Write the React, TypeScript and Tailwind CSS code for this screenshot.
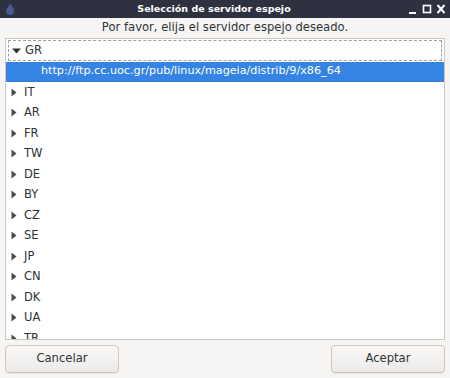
import React from "react";

const countries = ["IT", "AR", "FR", "TW", "DE", "BY", "CZ", "SE", "JP", "CN", "DK", "UA", "TR"];

function RightTri() {
  return (
    <svg width="6" height="9" viewBox="0 0 6 9" className="shrink-0">
      <path d="M0.5 0.5 L5.5 4.5 L0.5 8.5 Z" fill="#4a4a4a" />
    </svg>
  );
}

function DownTri() {
  return (
    <svg width="9" height="6" viewBox="0 0 9 6" className="shrink-0">
      <path d="M0 0.5 L9 0.5 L4.5 5.5 Z" fill="#333" />
    </svg>
  );
}

export default function App() {
  const font = { fontFamily: '"DejaVu Sans", sans-serif' };
  return (
    <div className="w-[450px] h-[378px] flex flex-col bg-[#f6f5f4] overflow-hidden" style={font}>
      <div className="h-[18px] bg-[#2e3140] flex items-center relative shrink-0">
        <svg width="12" height="14" viewBox="0 0 12 14" className="absolute left-[4px] top-[2px]">
          <path d="M6 1 C7 4 10 5 10 9 C10 12 8 13 6 13 C4 13 2 12 2 9 C2 6 5 5 6 1 Z" fill="#4a5a8c" />
        </svg>
        <div className="flex-1 text-center text-white font-bold text-[9.5px] leading-none pr-[22px]">Selección de servidor espejo</div>
        <div className="absolute right-[4px] top-[3px] flex items-center gap-[4px]">
          <svg width="10" height="12" viewBox="0 0 10 12">
            <rect x="1" y="9" width="7" height="2" fill="#fff" />
          </svg>
          <svg width="10" height="12" viewBox="0 0 10 12">
            <rect x="1.5" y="2.5" width="7" height="7" fill="none" stroke="#fff" strokeWidth="1.6" />
          </svg>
          <svg width="10" height="12" viewBox="0 0 10 12">
            <path d="M1.5 2 L8.5 10 M8.5 2 L1.5 10" stroke="#fff" strokeWidth="2" />
          </svg>
        </div>
      </div>
      <div className="h-[20px] flex items-center justify-center text-[11.6px] text-[#2e3436] shrink-0">
        Por favor, elija el servidor espejo deseado.
      </div>
      <div className="mx-[5px] h-[302px] bg-white border border-[#cdc7c2] overflow-hidden flex flex-col text-[11.5px] text-[#2e3436] shrink-0">
        <div className="h-[21px] mx-[2px] mt-[1px] border border-dashed border-[#a0a0a0] flex items-center gap-[4px] pl-[3px] shrink-0">
          <DownTri />
          <span>GR</span>
        </div>
        <div className="h-[20px] mt-[1px] bg-[#3584e4] text-white flex items-center pl-[35px] shrink-0 border-b border-[#3a7dd0] text-[11.2px]">
          http://ftp.cc.uoc.gr/pub/linux/mageia/distrib/9/x86_64
        </div>
        {countries.map((c) => (
          <div key={c} className="h-[20.5px] flex items-center gap-[7px] pl-[5px] shrink-0">
            <RightTri />
            <span>{c}</span>
          </div>
        ))}
      </div>
      <div className="flex justify-between px-[5px] pt-[5px]">
        <button className="w-[114px] h-[28px] rounded-[4px] border border-[#cdc7c2] bg-gradient-to-b from-[#f8f7f6] to-[#edebe9] text-[11.6px] text-[#2e3436] shadow-[0_1px_0_rgba(0,0,0,0.06)]">
          Cancelar
        </button>
        <button className="w-[114px] h-[28px] rounded-[4px] border border-[#cdc7c2] bg-gradient-to-b from-[#f8f7f6] to-[#edebe9] text-[11.6px] text-[#2e3436] shadow-[0_1px_0_rgba(0,0,0,0.06)]">
          Aceptar
        </button>
      </div>
    </div>
  );
}
